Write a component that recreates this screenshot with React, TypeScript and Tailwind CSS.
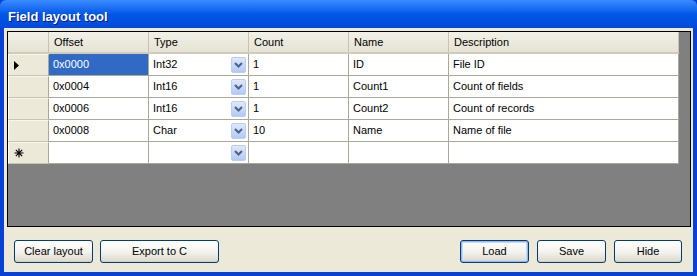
import React from "react";

const cols = [
  { w: "w-[100px]" },
  { w: "w-[100px]" },
  { w: "w-[100px]" },
  { w: "w-[100px]" },
  { w: "w-[230px]" },
];

const rows = [
  { offset: "0x0000", type: "Int32", count: "1", name: "ID", desc: "File ID", current: true },
  { offset: "0x0004", type: "Int16", count: "1", name: "Count1", desc: "Count of fields" },
  { offset: "0x0006", type: "Int16", count: "1", name: "Count2", desc: "Count of records" },
  { offset: "0x0008", type: "Char", count: "10", name: "Name", desc: "Name of file" },
];

function Combo() {
  return (
    <div className="ml-auto mr-[2px] flex h-[16px] w-[15px] items-center justify-center rounded-[2px] border border-[#b9cdf5] bg-gradient-to-b from-[#dfe9fd] to-[#b3c8f5]">
      <svg width="9" height="6" viewBox="0 0 9 6">
        <path d="M1 1 L4.5 4.5 L8 1" fill="none" stroke="#4d6185" strokeWidth="2" />
      </svg>
    </div>
  );
}

function RowHeader({ kind }: { kind?: "current" | "new" }) {
  return (
    <div className="flex h-full w-[41px] shrink-0 items-center border-r border-b border-r-[#aca899] border-b-[#c8c4b3] border-l border-l-white border-t border-t-[#f6f5ee] bg-[#ece9d8] pl-[4px]">
      {kind === "current" && (
        <svg width="6" height="9" viewBox="0 0 6 9" className="ml-[1px]">
          <path d="M0 0 L5 4.5 L0 9 Z" fill="#000" />
        </svg>
      )}
      {kind === "new" && (
        <svg width="10" height="10" viewBox="0 0 10 10" className="ml-[1px]">
          <path d="M5 0.5 V9.5 M0.5 5 H9.5 M1.8 1.8 L8.2 8.2 M8.2 1.8 L1.8 8.2" stroke="#000" strokeWidth="1.1" />
        </svg>
      )}
    </div>
  );
}

function Cell({ w, children, selected, combo }: { w: string; children?: React.ReactNode; selected?: boolean; combo?: boolean }) {
  return (
    <div
      className={`flex h-full ${w} shrink-0 items-center border-r border-b border-[#aca899] pl-[4px] ${
        selected ? "bg-[#316ac5] text-white" : "bg-white text-black"
      }`}
    >
      <span className="whitespace-nowrap">{children}</span>
      {combo && <Combo />}
    </div>
  );
}

function XPButton({ label, w, def }: { label: string; w: string; def?: boolean }) {
  return (
    <button
      className={`h-[23px] ${w} rounded-[3px] border border-[#003c74] bg-gradient-to-b from-[#ffffff] via-[#f4f3ee] to-[#dcd8cb] text-[11px] text-black ${
        def ? "shadow-[inset_0_0_0_1px_#9bb6ec,inset_0_0_0_2px_#c6d8f8]" : "shadow-[inset_0_-1px_0_#d6d0c5]"
      }`}
    >
      {label}
    </button>
  );
}

export default function App() {
  return (
    <div
      className="flex h-[276px] w-[697px] flex-col overflow-hidden bg-[#0841d6] text-[11px]"
      style={{ fontFamily: '"Liberation Sans", Arial, sans-serif' }}
    >
      {/* Title bar */}
      <div className="flex h-[28px] shrink-0 items-center rounded-t-[6px] bg-gradient-to-b from-[#3a8cff] via-[#0058e8] to-[#0049d8] pl-[8px] pt-[5px]">
        <span className="text-[13px] font-bold text-white [text-shadow:1px_1px_0_#0a1883]">Field layout tool</span>
      </div>
      {/* Client */}
      <div className="mx-[4px] mb-[4px] flex flex-1 flex-col bg-[#ece9d8] pl-[3px] pr-[2px] pt-[3px]">
        <div className="flex h-[196px] flex-col border border-black bg-[#808080]">
          {/* header */}
          <div className="flex h-[22px] shrink-0">
            <div className="h-full w-[41px] shrink-0 border-r border-[#c7c5b2] border-b-[2px] border-b-[#d0ccbc] bg-gradient-to-b from-[#f2f1e8] to-[#e6e3d3]" />
            {["Offset", "Type", "Count", "Name", "Description"].map((h, i) => (
              <div
                key={h}
                className={`flex h-full ${cols[i].w} shrink-0 items-center border-r border-[#c7c5b2] border-b-[2px] border-b-[#d0ccbc] bg-gradient-to-b from-[#f2f1e8] to-[#e6e3d3] pl-[5px] text-black`}
              >
                {h}
              </div>
            ))}
          </div>
          {rows.map((r, idx) => (
            <div key={idx} className="flex h-[22px] shrink-0">
              <RowHeader kind={r.current ? "current" : undefined} />
              <Cell w={cols[0].w} selected={r.current}>
                {r.offset}
              </Cell>
              <Cell w={cols[1].w} combo>
                {r.type}
              </Cell>
              <Cell w={cols[2].w}>{r.count}</Cell>
              <Cell w={cols[3].w}>{r.name}</Cell>
              <Cell w={cols[4].w}>{r.desc}</Cell>
            </div>
          ))}
          <div className="flex h-[22px] shrink-0">
            <RowHeader kind="new" />
            <Cell w={cols[0].w} />
            <Cell w={cols[1].w} combo />
            <Cell w={cols[2].w} />
            <Cell w={cols[3].w} />
            <Cell w={cols[4].w} />
          </div>
        </div>
        {/* Buttons */}
        <div className="mt-[13px] flex items-center pl-[7px] pr-[9px]">
          <XPButton label="Clear layout" w="w-[79px]" />
          <div className="ml-[7px]">
            <XPButton label="Export to C" w="w-[119px]" />
          </div>
          <div className="ml-auto flex gap-[8px]">
            <XPButton label="Load" w="w-[69px]" def />
            <XPButton label="Save" w="w-[69px]" />
            <XPButton label="Hide" w="w-[68px]" />
          </div>
        </div>
      </div>
    </div>
  );
}
